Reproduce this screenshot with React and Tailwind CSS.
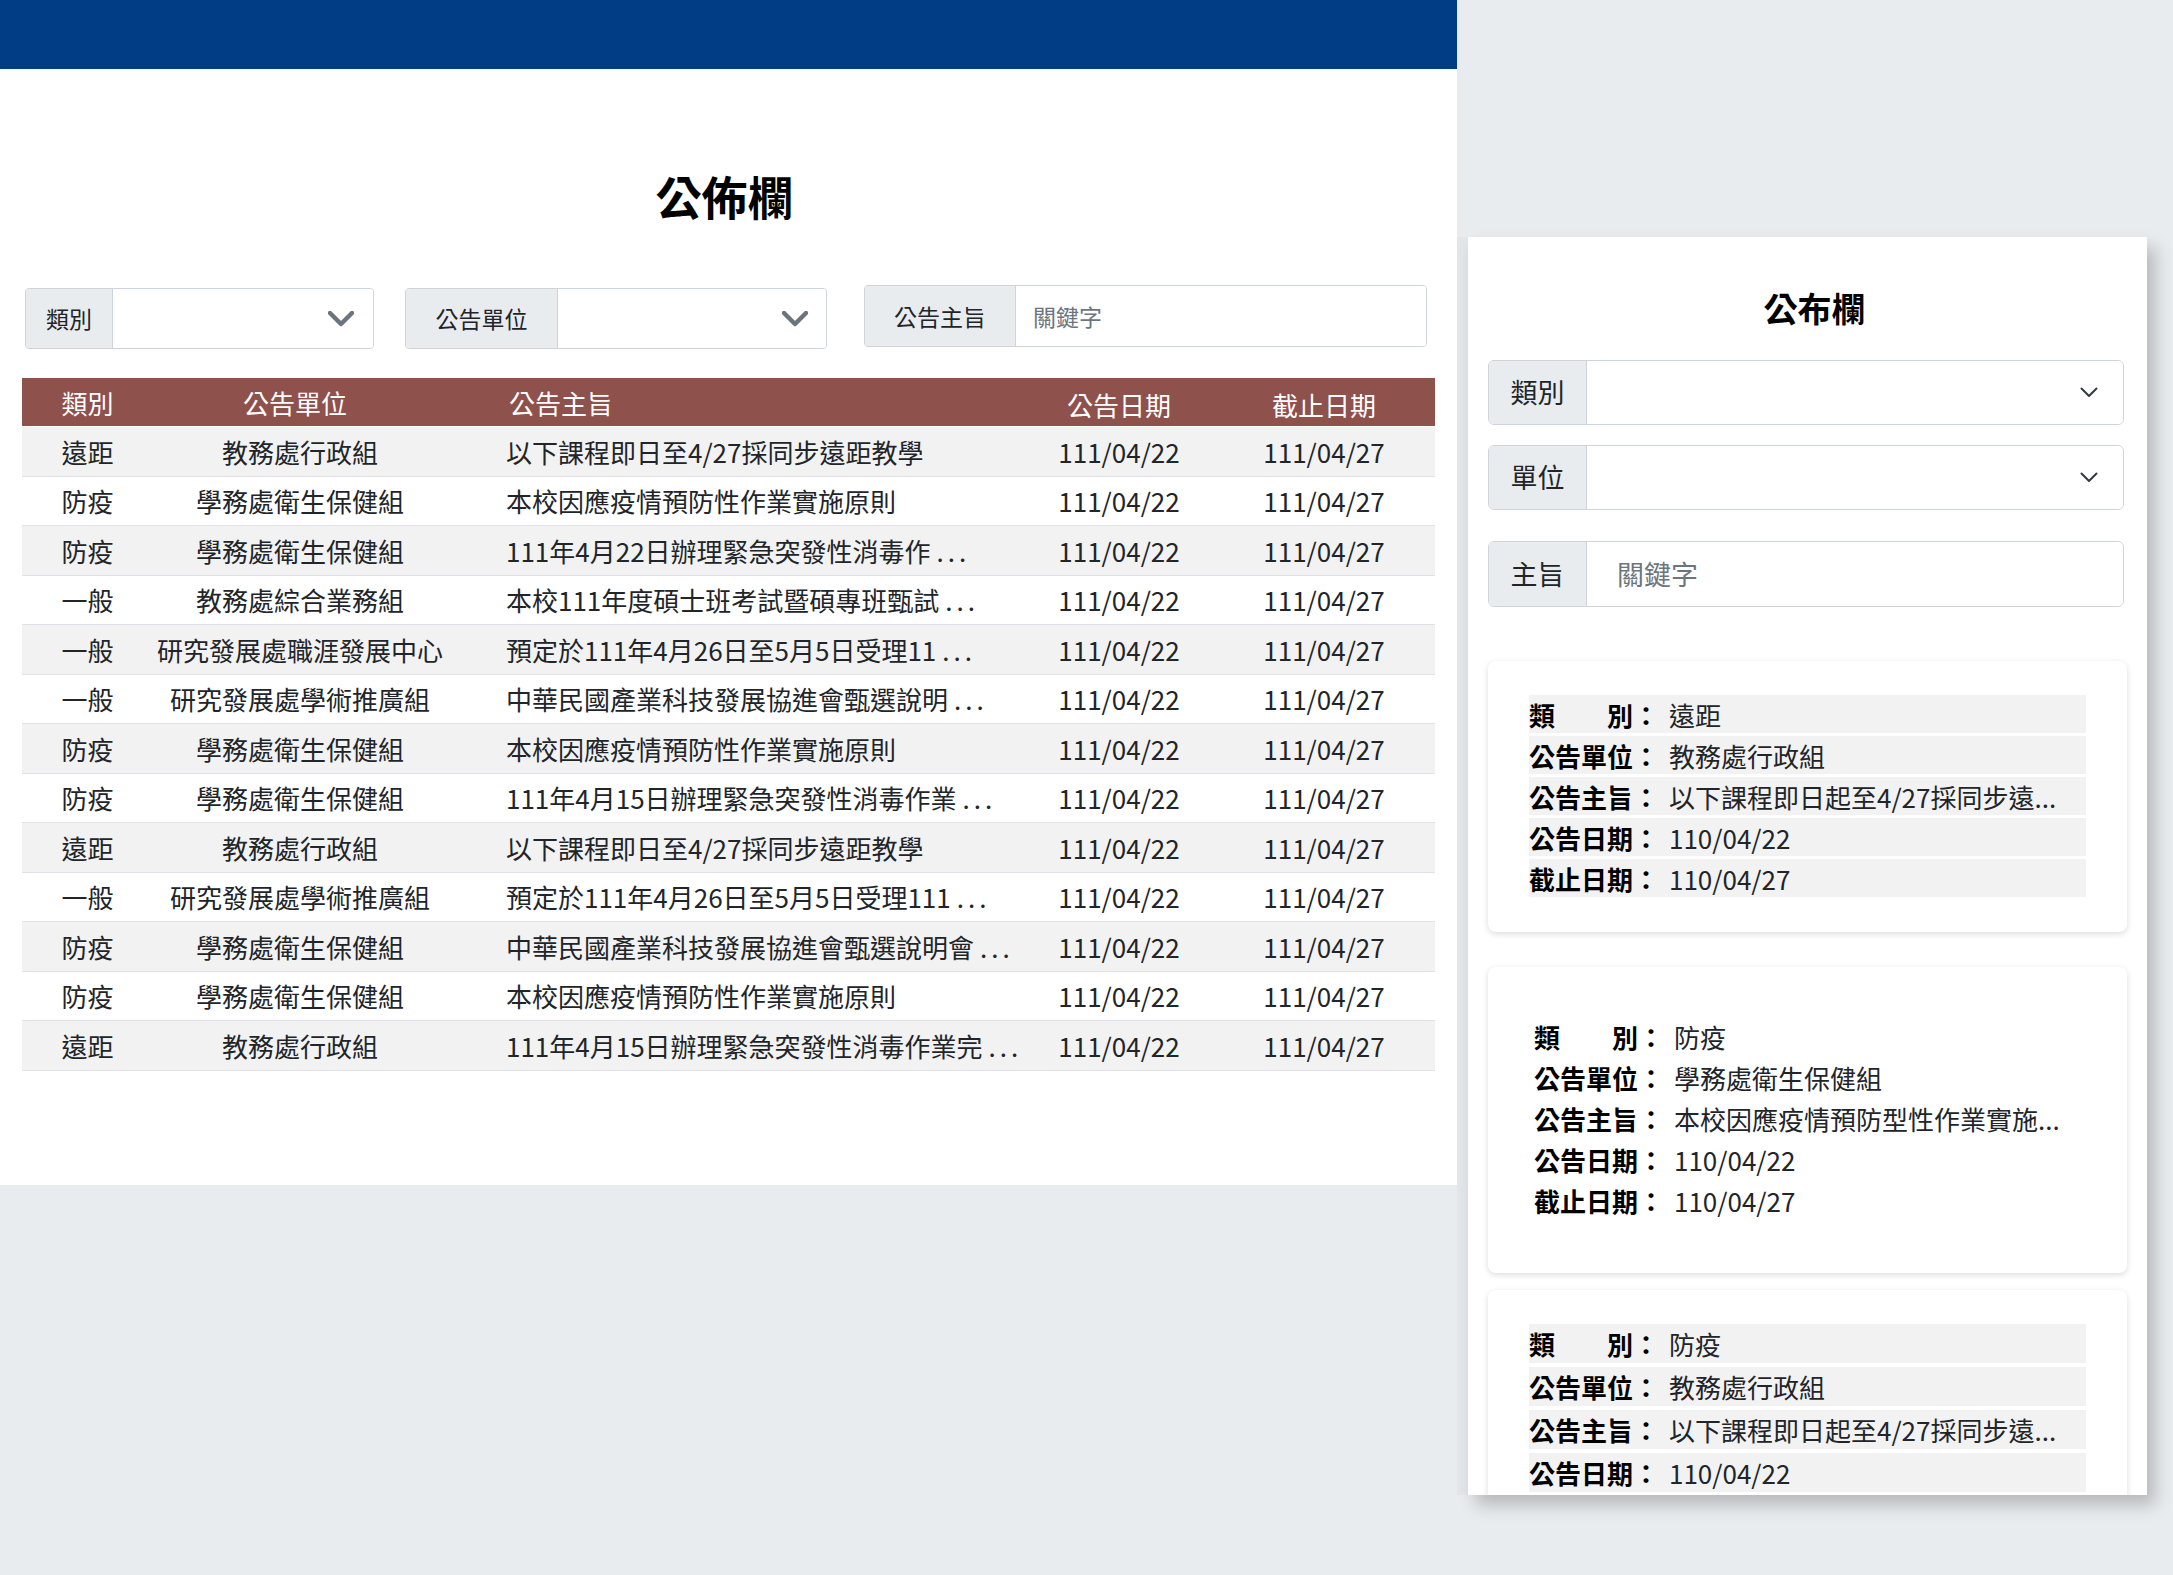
import React from "react";

const rows = [
  ["遠距", "教務處行政組", "以下課程即日至4/27採同步遠距教學", false],
  ["防疫", "學務處衛生保健組", "本校因應疫情預防性作業實施原則", false],
  ["防疫", "學務處衛生保健組", "111年4月22日辦理緊急突發性消毒作", true],
  ["一般", "教務處綜合業務組", "本校111年度碩士班考試暨碩專班甄試", true],
  ["一般", "研究發展處職涯發展中心", "預定於111年4月26日至5月5日受理11", true],
  ["一般", "研究發展處學術推廣組", "中華民國產業科技發展協進會甄選說明", true],
  ["防疫", "學務處衛生保健組", "本校因應疫情預防性作業實施原則", false],
  ["防疫", "學務處衛生保健組", "111年4月15日辦理緊急突發性消毒作業", true],
  ["遠距", "教務處行政組", "以下課程即日至4/27採同步遠距教學", false],
  ["一般", "研究發展處學術推廣組", "預定於111年4月26日至5月5日受理111", true],
  ["防疫", "學務處衛生保健組", "中華民國產業科技發展協進會甄選說明會", true],
  ["防疫", "學務處衛生保健組", "本校因應疫情預防性作業實施原則", false],
  ["遠距", "教務處行政組", "111年4月15日辦理緊急突發性消毒作業完", true],
];

function BigChevron() {
  return (
    <svg width="26" height="16" viewBox="0 0 26 16" className="shrink-0">
      <polyline points="2,2 13,13 24,2" fill="none" stroke="#6c757d" strokeWidth="4.5" strokeLinecap="round" strokeLinejoin="round" />
    </svg>
  );
}

function SmallChevron() {
  return (
    <svg width="18" height="11" viewBox="0 0 18 11" className="shrink-0">
      <polyline points="1.5,1.5 9,9 16.5,1.5" fill="none" stroke="#343a40" strokeWidth="2" strokeLinecap="round" strokeLinejoin="round" />
    </svg>
  );
}

function CardRow({ label, value, rowClass }) {
  return (
    <div className={rowClass}>
      <span className="w-[140px] shrink-0 font-bold text-black whitespace-pre">{label}</span>
      <span className="text-[#212529] whitespace-nowrap">{value}</span>
    </div>
  );
}

function Card({ data, variant }) {
  const labels = ["類　　別：", "公告單位：", "公告主旨：", "公告日期：", "截止日期："];
  if (variant === "plain") {
    return (
      <div className="w-[639px] h-[306px] bg-white rounded-[8px] shadow-[0_2px_6px_rgba(0,0,0,0.14)] pt-[49px] pl-[46px] pr-[41px] flex flex-col shrink-0">
        {labels.map((l, i) => (
          <CardRow key={i} label={l} value={data[i]} rowClass="h-[41px] flex items-center text-[26px]" />
        ))}
      </div>
    );
  }
  const h = variant === "a" ? "h-[38px]" : "h-[39px]";
  const gap = variant === "a" ? "gap-[3px]" : "gap-[4px]";
  return (
    <div className={`w-[639px] ${variant === "a" ? "h-[271px]" : "h-[300px]"} bg-white rounded-[8px] shadow-[0_2px_6px_rgba(0,0,0,0.14)] pt-[34px] px-[41px] flex flex-col ${gap} shrink-0`}>
      {labels.map((l, i) => (
        <CardRow key={i} label={l} value={data[i]} rowClass={`${h} flex items-center text-[26px] bg-[#f2f2f2] shrink-0`} />
      ))}
    </div>
  );
}

export default function App() {
  return (
    <div className="w-[2173px] h-[1575px] bg-[#e9ecef] flex items-start overflow-hidden font-['Noto_Sans_CJK_TC','Noto_Sans',sans-serif] text-[#212529]">
      {/* Main desktop panel */}
      <div className="w-[1457px] h-[1185px] bg-white flex flex-col shrink-0">
        <div className="h-[69px] bg-[#013d84] shrink-0" />
        <h1 className="mt-[100px] h-[52px] leading-[52px] text-[46px] font-bold text-center text-black pr-[8px]">公佈欄</h1>

        <div className="mt-[64px] h-[64px] flex items-start pl-[25px]">
          <div className="mt-[3px] w-[349px] h-[61px] flex border border-[#ced4da] rounded-[4px] overflow-hidden">
            <div className="w-[87px] bg-[#e9ecef] border-r border-[#ced4da] flex items-center justify-center text-[23px] text-[#212529]">類別</div>
            <div className="flex-1 bg-white flex items-center justify-end pr-[19px]"><BigChevron /></div>
          </div>
          <div className="ml-[31px] mt-[3px] w-[422px] h-[61px] flex border border-[#ced4da] rounded-[4px] overflow-hidden">
            <div className="w-[152px] bg-[#e9ecef] border-r border-[#ced4da] flex items-center justify-center text-[23px] text-[#212529]">公告單位</div>
            <div className="flex-1 bg-white flex items-center justify-end pr-[18px]"><BigChevron /></div>
          </div>
          <div className="ml-[37px] w-[563px] h-[62px] flex border border-[#ced4da] rounded-[4px] overflow-hidden">
            <div className="w-[151px] bg-[#e9ecef] border-r border-[#ced4da] flex items-center justify-center text-[23px] text-[#212529]">公告主旨</div>
            <div className="flex-1 bg-white flex items-center pl-[17px] text-[23px] text-[#6c757d]">關鍵字</div>
          </div>
        </div>

        <div className="mt-[29px] mx-[22px] text-[26px]">
          <div className="grid grid-cols-[131px_294px_587px_170px_230px] h-[48px] bg-[#8f514c] text-white items-center">
            <div className="text-center">類別</div>
            <div className="text-center pr-[10px]">公告單位</div>
            <div className="pl-[62px]">公告主旨</div>
            <div className="text-center pt-[4px]">公告日期</div>
            <div className="text-center pl-[10px] pt-[4px]">截止日期</div>
          </div>
          <div className="mt-[1px]">
            {rows.map((r, i) => (
              <div
                key={i}
                className={`grid grid-cols-[131px_294px_587px_170px_230px] h-[49.5px] border-b border-[#dee2e6] items-center ${i % 2 === 0 ? "bg-[#f2f2f2]" : "bg-white"}`}
              >
                <div className="text-center">{r[0]}</div>
                <div className="text-center whitespace-nowrap">{r[1]}</div>
                <div className="pl-[59px] whitespace-nowrap">
                  {r[2]}
                  {r[3] && <span className="tracking-[4px] ml-[6px]">...</span>}
                </div>
                <div className="text-center">111/04/22</div>
                <div className="text-center pl-[10px]">111/04/27</div>
              </div>
            ))}
          </div>
        </div>
      </div>

      {/* subtle strip */}
      <div className="mt-[237px] w-[11px] h-[1258px] bg-[#e2e5e9] shrink-0" />

      {/* Mobile panel */}
      <div className="mt-[237px] w-[679px] h-[1258px] bg-white overflow-hidden shadow-[8px_10px_16px_rgba(0,0,0,0.22)] pl-[20px] flex flex-col shrink-0">
        <h2 className="mt-[51px] h-[40px] leading-[40px] text-[34px] font-bold text-center text-black pl-[14px] pr-[20px]">公布欄</h2>

        <div className="mt-[32px] w-[636px] h-[65px] flex border border-[#ced4da] rounded-[6px] overflow-hidden shrink-0">
          <div className="w-[98px] bg-[#e9ecef] border-r border-[#ced4da] flex items-center justify-center text-[27px] text-[#212529]">類別</div>
          <div className="flex-1 bg-white flex items-center justify-end pr-[25px]"><SmallChevron /></div>
        </div>
        <div className="mt-[20px] w-[636px] h-[65px] flex border border-[#ced4da] rounded-[6px] overflow-hidden shrink-0">
          <div className="w-[98px] bg-[#e9ecef] border-r border-[#ced4da] flex items-center justify-center text-[27px] text-[#212529]">單位</div>
          <div className="flex-1 bg-white flex items-center justify-end pr-[25px]"><SmallChevron /></div>
        </div>
        <div className="mt-[31px] w-[636px] h-[66px] flex border border-[#ced4da] rounded-[6px] overflow-hidden shrink-0">
          <div className="w-[98px] bg-[#e9ecef] border-r border-[#ced4da] flex items-center justify-center text-[27px] text-[#212529]">主旨</div>
          <div className="flex-1 bg-white flex items-center pl-[30px] text-[27px] text-[#6c757d]">關鍵字</div>
        </div>

        <div className="mt-[54px] flex flex-col">
          <Card variant="a" data={["遠距", "教務處行政組", "以下課程即日起至4/27採同步遠...", "110/04/22", "110/04/27"]} />
          <div className="h-[35px] shrink-0" />
          <Card variant="plain" data={["防疫", "學務處衛生保健組", "本校因應疫情預防型性作業實施...", "110/04/22", "110/04/27"]} />
          <div className="h-[17px] shrink-0" />
          <Card variant="b" data={["防疫", "教務處行政組", "以下課程即日起至4/27採同步遠...", "110/04/22", "110/04/27"]} />
        </div>
      </div>
    </div>
  );
}
